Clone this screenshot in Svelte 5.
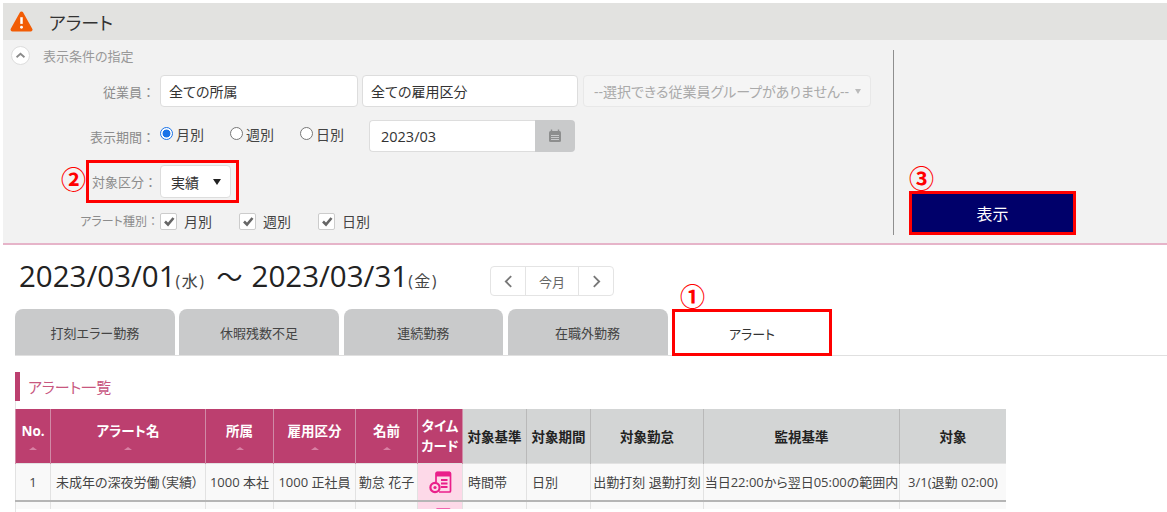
<script>
	const tabs = ['打刻エラー勤務', '休暇残数不足', '連続勤務', '在職外勤務'];
	const pinkHeads = [
		{ label: 'No.', key: 'no' },
		{ label: 'アラート名', key: 'name' },
		{ label: '所属', key: 'dept' },
		{ label: '雇用区分', key: 'type' },
		{ label: '名前', key: 'person' }
	];
	const grayHeads = ['対象基準', '対象期間', '対象勤怠', '監視基準', '対象'];
	const widths = [35, 155, 68, 82, 62, 45, 64, 64, 113, 196, 107];
	const periods = [
		{ label: '月別', checked: true },
		{ label: '週別', checked: false },
		{ label: '日別', checked: false }
	];
</script>

{#snippet timecard()}
	<svg class="card-icon" viewBox="0 0 24 24" width="24" height="24" aria-hidden="true">
		<path d="M8 12V3.5a1 1 0 0 1 1-1h12.5a1 1 0 0 1 1 1V21a1 1 0 0 1-1 1H11" fill="none" stroke="#ea1f8a" stroke-width="1.7" />
		<path d="M8 6.5V2.5a1 1 0 0 1 1-1h12.5a1 1 0 0 1 1 1v4z" fill="#ea1f8a" />
		<path d="M13 10h6.5M13 13.5h6.5M13 17h6.5" stroke="#ea1f8a" stroke-width="1.8" />
		<circle cx="7" cy="17.5" r="4.6" fill="#fdd9e8" stroke="#ea1f8a" stroke-width="2.2" />
		<circle cx="7" cy="17.5" r="1.6" fill="#ea1f8a" />
	</svg>
{/snippet}

<div class="page">
	<header class="titlebar">
		<svg class="warn" viewBox="0 0 24 22" width="23" height="21" aria-hidden="true">
			<path d="M12 2.5 L21.5 19.5 H2.5 Z" fill="#f25c05" stroke="#f25c05" stroke-width="4" stroke-linejoin="round" />
			<path d="M12 6.5v7" stroke="#fff" stroke-width="2.6" />
			<circle cx="12" cy="17" r="1.5" fill="#fff" />
		</svg>
		<h1>アラート</h1>
	</header>

	<section class="panel">
		<div class="conditions">
			<div class="cond-head">
				<span class="collapse">
					<svg viewBox="0 0 12 8" width="11" height="7" aria-hidden="true">
						<path d="M1.5 6 L6 2 L10.5 6" fill="none" stroke="#8a8a8a" stroke-width="2" />
					</svg>
				</span>
				<span>表示条件の指定</span>
			</div>

			<div class="row row-staff">
				<span class="label">従業員：</span>
				<div class="field w-all">全ての所属</div>
				<div class="field w-type">全ての雇用区分</div>
				<div class="field disabled">
					<span>--選択できる従業員グループがありません--</span>
					<i class="caret small"></i>
				</div>
			</div>

			<div class="row row-period">
				<span class="label">表示期間：</span>
				<div class="radios">
					{#each periods as p}
						<span class="radio-item">
							<span class="radio" class:on={p.checked}></span>{p.label}
						</span>
					{/each}
				</div>
				<div class="date-group">
					<div class="date-input">2023/03</div>
					<div class="date-btn">
						<svg viewBox="0 0 14 14" width="14" height="14" aria-hidden="true">
							<rect x="1" y="2" width="12" height="11" rx="1.5" fill="#8d8e8e" />
							<path d="M3.5 0.5v3M10.5 0.5v3" stroke="#8d8e8e" stroke-width="1.4" />
							<path d="M3 6.5h8M3 8.5h8M3 10.5h8" stroke="#c9cacb" stroke-width="1" />
						</svg>
					</div>
				</div>
			</div>

			<div class="row row-target">
				<span class="num num-2">②</span>
				<div class="mark">
					<span class="target-label">対象区分：</span>
					<div class="field select">実績<i class="caret"></i></div>
				</div>
			</div>

			<div class="row row-kinds">
				<span class="label tight">アラート種別 ：</span>
				{#each ['月別', '週別', '日別'] as k}
					<span class="check-item">
						<span class="check">
							<svg viewBox="0 0 12 12" width="12" height="12" aria-hidden="true">
								<path d="M2 6.5 L5 9.5 L10.5 3" fill="none" stroke="#666" stroke-width="2.6" />
							</svg>
						</span>{k}
					</span>
				{/each}
			</div>
		</div>

		<div class="action">
			<span class="num">③</span>
			<button class="show-btn">表示</button>
		</div>
	</section>

	<div class="range-row">
		<h2>2023/03/01<small>(水)</small><span class="tilde">〜</span>2023/03/31<small>(金)</small></h2>
		<div class="pager">
			<span class="pg arrow">
				<svg viewBox="0 0 10 16" width="9" height="15" aria-hidden="true"><path d="M8 2 L2 8 L8 14" fill="none" stroke="#777" stroke-width="2" /></svg>
			</span>
			<span class="pg today">今月</span>
			<span class="pg arrow">
				<svg viewBox="0 0 10 16" width="9" height="15" aria-hidden="true"><path d="M2 2 L8 8 L2 14" fill="none" stroke="#777" stroke-width="2" /></svg>
			</span>
		</div>
		<span class="num num-1">①</span>
	</div>

	<nav class="tabs">
		{#each tabs as t}
			<div class="tab">{t}</div>
		{/each}
		<div class="tab active">アラート</div>
	</nav>

	<main class="content">
		<h3>アラート一覧</h3>
		<div class="table-clip">
			<table>
				<colgroup>
					{#each widths as w}
						<col style="width: {w}px" />
					{/each}
				</colgroup>
				<thead>
					<tr>
						{#each pinkHeads as h}
							<th class="pink">{h.label}<i class="sort"></i></th>
						{/each}
						<th class="pink lines">タイム<br />カード</th>
						{#each grayHeads as h}
							<th>{h}</th>
						{/each}
					</tr>
				</thead>
				<tbody>
					<tr>
						<td class="c">1</td>
						<td>未成年の深夜労働（実績）</td>
						<td class="c">1000 本社</td>
						<td class="c">1000 正社員</td>
						<td class="c">勤怠 花子</td>
						<td class="c card">{@render timecard()}</td>
						<td>時間帯</td>
						<td>日別</td>
						<td class="c">出勤打刻 退勤打刻</td>
						<td class="c">当日22:00から翌日05:00の範囲内</td>
						<td class="c">3/1(退勤 02:00)</td>
					</tr>
					<tr>
						<td></td><td></td><td></td><td></td><td></td>
						<td class="c card">{@render timecard()}</td>
						<td></td><td></td><td></td><td></td><td></td>
					</tr>
				</tbody>
			</table>
		</div>
	</main>
</div>

<style>
	:global(body) {
		margin: 0;
		background: #fff;
		overflow: hidden;
	}

	.page {
		width: 1167px;
		height: 512px;
		padding-top: 3px;
		box-sizing: border-box;
		overflow: hidden;
		font-family: "Open Sans", "Noto Sans CJK JP", sans-serif;
		font-feature-settings: "palt";
		font-size: 13px;
		color: #333;
	}

	.titlebar {
		margin-left: 3px;
		height: 37px;
		background: #e2e2e0;
		display: flex;
		align-items: center;
		padding-left: 7px;
		gap: 16px;
	}

	.titlebar h1 {
		margin: 0;
		font-size: 18px;
		font-weight: 400;
		color: #333;
	}

	.panel {
		margin-left: 3px;
		height: 205px;
		box-sizing: border-box;
		background: #f2f2f2;
		border-bottom: 2px solid #e6b4c9;
		display: flex;
		align-items: flex-start;
	}

	.conditions {
		width: 890px;
		flex-shrink: 0;
	}

	.cond-head {
		display: flex;
		align-items: center;
		gap: 13px;
		height: 20px;
		padding: 5px 0 0 8px;
		color: #999;
		font-size: 13px;
	}

	.collapse {
		width: 17px;
		height: 17px;
		border: 1px solid #ddd;
		border-radius: 50%;
		background: #fff;
		display: flex;
		align-items: center;
		justify-content: center;
	}

	.row {
		display: flex;
		align-items: center;
		white-space: nowrap;
	}

	.label {
		width: 157px;
		box-sizing: border-box;
		padding-right: 5px;
		text-align: right;
		color: #8c8c8c;
		font-size: 13px;
		font-feature-settings: normal;
	}

	.label.tight {
		font-size: 12px;
		font-feature-settings: "palt";
		padding-right: 4px;
	}

	.row-staff {
		margin-top: 10px;
	}

	.field {
		height: 32px;
		box-sizing: border-box;
		background: #fff;
		border: 1px solid #ddd;
		border-radius: 4px;
		display: flex;
		align-items: center;
		padding-left: 8px;
		font-size: 14px;
		color: #333;
	}

	.w-all {
		width: 198px;
		margin-right: 4px;
	}

	.w-type {
		width: 216px;
		margin-right: 5px;
	}

	.disabled {
		width: 288px;
		background: #f5f5f5;
		border-color: #e8e8e8;
		color: #aaa;
		justify-content: space-between;
		padding: 0 9px 0 10px;
	}

	.caret {
		display: inline-block;
		width: 0;
		height: 0;
		border-left: 4.5px solid transparent;
		border-right: 4.5px solid transparent;
		border-top: 6px solid #222;
	}

	.caret.small {
		border-left-width: 3.5px;
		border-right-width: 3.5px;
		border-top: 5px solid #bbb;
	}

	.row-period {
		margin-top: 13px;
		height: 32px;
	}

	.radios {
		display: flex;
		width: 209px;
		gap: 14px;
		margin-top: -5px;
	}

	.radio-item {
		display: flex;
		align-items: center;
		gap: 3px;
		font-size: 14px;
		color: #444;
		width: 56px;
	}

	.radio {
		width: 13px;
		height: 13px;
		box-sizing: border-box;
		border: 1px solid #777;
		border-radius: 50%;
		background: #fff;
	}

	.radio.on {
		border-color: #1a73e8;
		background: radial-gradient(circle, #1a73e8 0 3.6px, #fff 4.3px);
	}

	.date-group {
		display: flex;
		height: 32px;
	}

	.date-input {
		width: 166px;
		box-sizing: border-box;
		background: #fff;
		border: 1px solid #ddd;
		border-right: 0;
		border-radius: 4px 0 0 4px;
		display: flex;
		align-items: center;
		padding-left: 11px;
		font-size: 14.5px;
	}

	.date-btn {
		width: 40px;
		background: #c9cacb;
		border-radius: 0 4px 4px 0;
		display: flex;
		align-items: center;
		justify-content: center;
	}

	.row-target {
		margin-top: 8px;
		padding-left: 58px;
		gap: 2px;
	}

	.num {
		color: #f00;
		font-size: 25px;
		font-weight: 700;
		line-height: 24px;
		font-family: "Noto Sans CJK JP", sans-serif;
	}

	.num-2 {
		width: 23px;
		margin-bottom: 8px;
	}

	.mark {
		width: 153px;
		height: 43px;
		box-sizing: border-box;
		border: 3px solid #f00;
		display: flex;
		align-items: center;
		padding-left: 3px;
		gap: 3px;
	}

	.target-label {
		font-size: 13px;
		color: #8c8c8c;
		width: 65px;
		font-feature-settings: normal;
	}

	.select {
		width: 71px;
		height: 33px;
		justify-content: space-between;
		padding: 0 9px 0 10px;
		font-size: 14px;
	}

	.row-kinds {
		margin-top: 8px;
	}

	.check-item {
		display: flex;
		align-items: center;
		gap: 7px;
		width: 79px;
		font-size: 14px;
		color: #444;
	}

	.check {
		width: 17px;
		height: 17px;
		box-sizing: border-box;
		background: #fff;
		border: 1px solid #ccc;
		border-radius: 2px;
		display: flex;
		align-items: center;
		justify-content: center;
	}

	.action {
		margin-top: 10px;
		height: 185px;
		box-sizing: border-box;
		border-left: 1px solid #8f8f8f;
		padding: 115px 0 0 15px;
		display: flex;
		flex-direction: column;
		align-items: flex-start;
	}

	.action .num {
		height: 27px;
	}

	.show-btn {
		width: 167px;
		height: 45px;
		box-sizing: border-box;
		background: #00006a;
		border: 3px solid #f00;
		color: #fff;
		font-family: inherit;
		font-feature-settings: inherit;
		font-size: 16px;
		padding: 0;
	}

	.range-row {
		height: 62px;
		display: flex;
		align-items: flex-start;
		padding-left: 19px;
	}

	h2 {
		margin: 11px 0 0;
		width: 471px;
		font-size: 29.5px;
		line-height: 40px;
		font-weight: 400;
		color: #222;
		white-space: nowrap;
	}

	h2 small {
		font-size: 16px;
		color: #444;
		letter-spacing: 1.5px;
	}

	.tilde {
		margin: 0 9px 0 11px;
		font-size: 26px;
	}

	.pager {
		margin-top: 21px;
		height: 30px;
		display: flex;
		box-sizing: border-box;
		background: #fff;
		border: 1px solid #e4e4e4;
		border-radius: 4px;
	}

	.pg {
		display: flex;
		align-items: center;
		justify-content: center;
		color: #666;
		font-size: 13px;
	}

	.arrow {
		width: 34px;
	}

	.today {
		width: 52px;
		border-left: 1px solid #e4e4e4;
		border-right: 1px solid #e4e4e4;
	}

	.num-1 {
		align-self: flex-end;
		margin-left: 66px;
	}

	.tabs {
		margin: 2px 0 0 15px;
		display: flex;
		gap: 4.5px;
		height: 47px;
		box-sizing: border-box;
		border-bottom: 1px solid #e0e0e0;
	}

	.tab {
		width: 159.75px;
		height: 46px;
		box-sizing: border-box;
		background: #c9cacb;
		border-radius: 8px 8px 0 0;
		display: flex;
		align-items: center;
		justify-content: center;
		padding-top: 1px;
		font-size: 13px;
		color: #444;
	}

	.tab.active {
		width: 160px;
		height: 47px;
		background: #fff;
		border: 3px solid #f00;
		border-radius: 0;
		font-size: 13px;
		color: #333;
	}

	.content {
		margin-left: 15px;
		border-left: 1px solid #e4e4e4;
		height: 153px;
	}

	h3 {
		margin: 16px 0 8px -1px;
		height: 29px;
		box-sizing: border-box;
		border-left: 5px solid #bc3f6f;
		padding-left: 8px;
		display: flex;
		align-items: center;
		font-size: 15px;
		font-weight: 400;
		color: #c8577f;
	}

	.table-clip {
		margin-left: -1px;
		width: 991px;
		height: 100px;
		overflow: hidden;
	}

	table {
		table-layout: fixed;
		width: 991px;
		border-collapse: collapse;
		font-size: 13px;
	}

	th {
		height: 54px;
		padding: 0;
		background: #d3d5d5;
		border: 1px solid #b9b9b9;
		border-top: 0;
		border-bottom: 0;
		color: #222;
		font-weight: 700;
		font-size: 13.5px;
		white-space: nowrap;
	}

	th.pink {
		background: #bc3f6f;
		color: #fff;
		border-color: #d08aa6;
		line-height: 16px;
	}

	th.lines {
		line-height: 20px;
	}

	.sort {
		display: block;
		width: 0;
		height: 0;
		margin: 8px auto 0;
		border-left: 4px solid transparent;
		border-right: 4px solid transparent;
		border-bottom: 3px solid #d881a4;
	}

	td {
		height: 37px;
		padding: 0 0 0 5px;
		background: #f9f9f9;
		border: 1px solid #e2e2e2;
		border-bottom: 2px solid #b5b5b5;
		color: #444;
		white-space: nowrap;
		overflow: hidden;
		box-sizing: border-box;
	}

	td.c {
		text-align: center;
		padding: 0;
	}

	td.card {
		background: #fdd9e8;
	}

	.card-icon {
		display: block;
		margin: 0 auto;
	}
</style>
